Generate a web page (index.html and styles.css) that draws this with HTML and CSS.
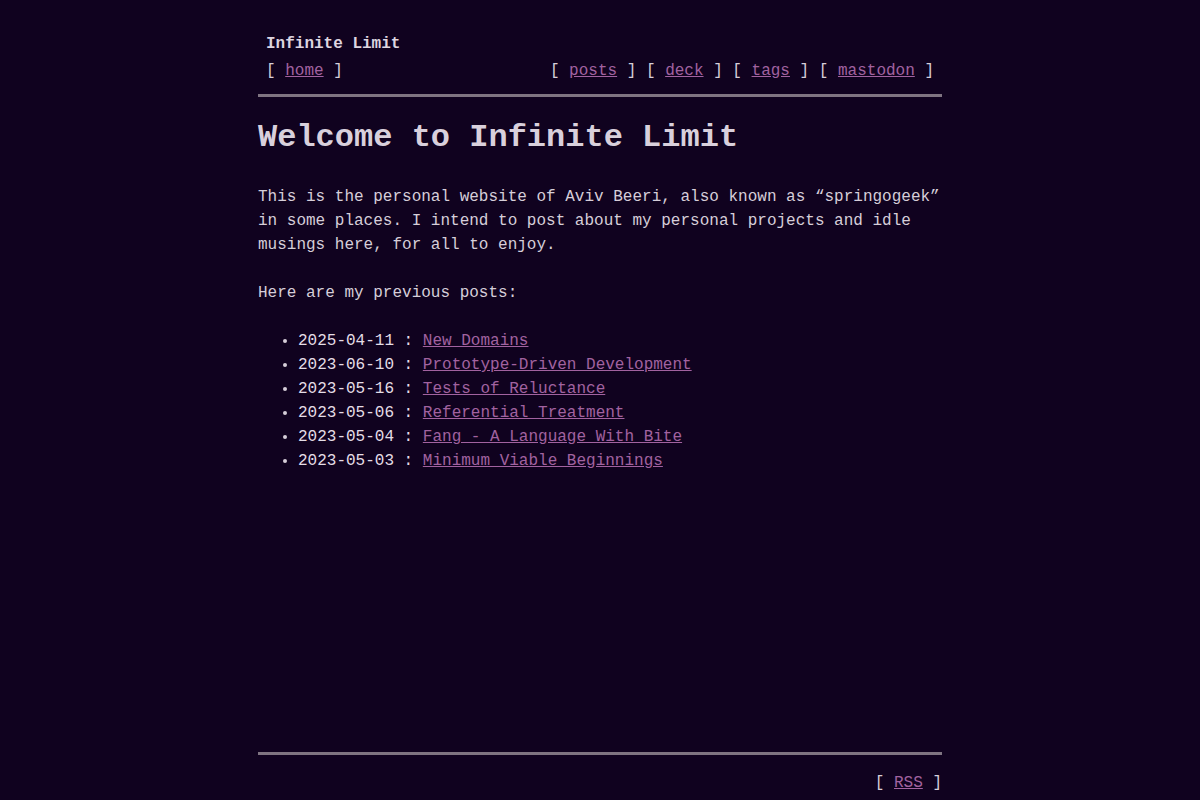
FILE: index.html
```html
<!DOCTYPE html>
<html lang="en">
<head>
<meta charset="utf-8">
<title>Infinite Limit</title>
<link rel="stylesheet" href="styles.css">
</head>
<body>
<div class="page">
  <header class="site-header">
    <div class="site-title">Infinite Limit</div>
    <nav class="site-nav">
      <span class="nav-group">[ <a href="#">home</a> ]</span>
      <span class="nav-group">[ <a href="#">posts</a> ] [ <a href="#">deck</a> ] [ <a href="#">tags</a> ] [ <a href="#">mastodon</a> ]</span>
    </nav>
  </header>
  <main class="content">
    <h1>Welcome to Infinite Limit</h1>
    <p>This is the personal website of Aviv Beeri, also known as “springogeek” in some places. I intend to post about my personal projects and idle musings here, for all to enjoy.</p>
    <p>Here are my previous posts:</p>
    <ul class="posts">
      <li><span class="date">2025-04-11 : </span><a href="#">New Domains</a></li>
      <li><span class="date">2023-06-10 : </span><a href="#">Prototype-Driven Development</a></li>
      <li><span class="date">2023-05-16 : </span><a href="#">Tests of Reluctance</a></li>
      <li><span class="date">2023-05-06 : </span><a href="#">Referential Treatment</a></li>
      <li><span class="date">2023-05-04 : </span><a href="#">Fang - A Language With Bite</a></li>
      <li><span class="date">2023-05-03 : </span><a href="#">Minimum Viable Beginnings</a></li>
    </ul>
  </main>
  <footer class="site-footer"><span class="nav-group">[ <a href="#">RSS</a> ]</span></footer>
</div>
</body>
</html>
```

FILE: styles.css
```css
html, body {
  margin: 0;
  padding: 0;
}

body {
  background: #10021f;
  color: #d6ced9;
  font-family: "Liberation Mono", "DejaVu Sans Mono", monospace;
  font-size: 16px;
  line-height: 24px;
}

a {
  color: #a262a0;
  text-decoration: underline;
}

.page {
  width: 684px;
  margin: 0 auto;
  min-height: 100vh;
  display: flex;
  flex-direction: column;
  box-sizing: border-box;
}

.site-header {
  padding-top: 32px;
  padding-bottom: 11px;
  border-bottom: 3px solid #7f7481;
}

.site-title {
  padding: 0 8px;
  font-weight: bold;
  color: #ded6e0;
}

.site-nav {
  display: flex;
  justify-content: space-between;
  padding: 0 8px;
  margin-top: 3px;
}

.nav-group {
  white-space: pre;
}

.content {
  flex: 1;
}

.content h1 {
  font-size: 32px;
  line-height: 38px;
  margin: 22px 0 28px;
  font-weight: bold;
  color: #d9d0dc;
}

.content p {
  margin: 0 0 24px;
}

.posts {
  margin: 0;
  padding-left: 40px;
}

.date {
  color: #e4dde6;
  white-space: pre;
}

.site-footer {
  border-top: 3px solid #7f7481;
  padding-top: 16px;
  padding-bottom: 5px;
  text-align: right;
}
```
